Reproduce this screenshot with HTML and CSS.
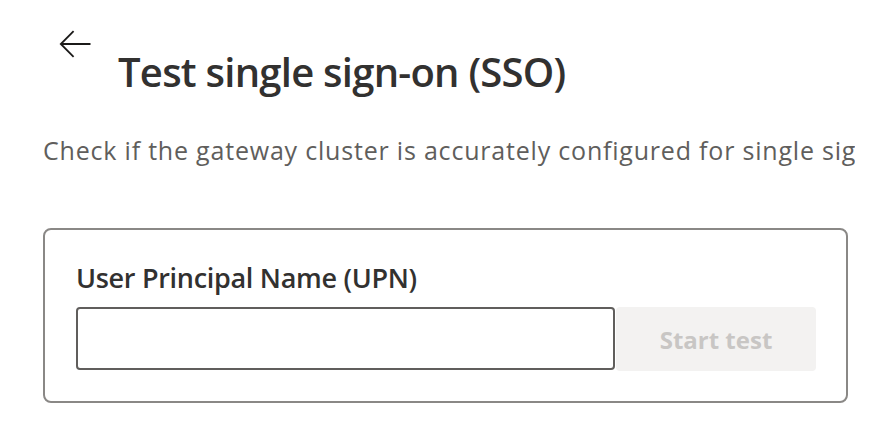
FILE: index.html
```html
<!DOCTYPE html>
<html lang="en">
<head>
<meta charset="utf-8">
<title>Test single sign-on (SSO)</title>
<link rel="stylesheet" href="styles.css">
</head>
<body>
<main class="page">
  <header class="header">
    <button class="back" type="button" aria-label="Back">
      <svg width="32" height="28" viewBox="0 0 32 28" aria-hidden="true">
        <path d="M31.5 14H1.8M14.6 1.2L1.8 14l12.8 12.8" fill="none" stroke="#1b1a19" stroke-width="1.8" stroke-linecap="butt" stroke-linejoin="miter"/>
      </svg>
    </button>
    <h1 class="title">Test single sign-on (SSO)</h1>
  </header>
  <p class="desc">Check if the gateway cluster is accurately configured for single sign-on by entering a user principal name.</p>
  <section class="card">
    <label class="label" for="upn">User Principal Name (UPN)</label>
    <div class="row">
      <input class="input" id="upn" type="text">
      <button class="start" type="button" disabled>Start test</button>
    </div>
  </section>
</main>
</body>
</html>
```

FILE: styles.css
```css
html, body {
  margin: 0;
  padding: 0;
  background: #ffffff;
}

body {
  font-family: "Open Sans", "Noto Sans", sans-serif;
  color: #323130;
}

.page {
  width: 812px;
  padding: 30px 0 0 43px;
  overflow: hidden;
}

.header {
  display: flex;
  align-items: flex-start;
}

.back {
  display: block;
  margin: 0 0 0 16px;
  padding: 0;
  border: 0;
  background: none;
  width: 32px;
  height: 28px;
  cursor: pointer;
}

.back svg {
  display: block;
}

.title {
  margin: 16px 0 0 27px;
  font-size: 40px;
  line-height: 52px;
  font-weight: 600;
  color: #323130;
  letter-spacing: -0.75px;
}

.desc {
  margin: 36px 0 0 0;
  font-size: 25px;
  line-height: 32px;
  color: #605e5c;
  white-space: nowrap;
  letter-spacing: 0.8px;
}

.card {
  box-sizing: border-box;
  width: 805px;
  margin-top: 62px;
  border: 2px solid #8a8886;
  border-radius: 8px;
  padding: 30px 30px 30px 31px;
}

.label {
  display: block;
  font-size: 27px;
  line-height: 36px;
  font-weight: 600;
  color: #323130;
  letter-spacing: -0.3px;
}

.row {
  display: flex;
  margin-top: 11px;
}

.input {
  box-sizing: border-box;
  flex: 1;
  height: 63px;
  margin: 0;
  border: 2px solid #605e5c;
  border-radius: 4px;
  background: #fff;
  font: inherit;
}

.start {
  box-sizing: border-box;
  width: 200px;
  height: 64px;
  margin: 0 0 0 1px;
  border: 0;
  border-radius: 4px;
  background: #f3f2f1;
  color: #c8c6c4;
  font-family: inherit;
  font-size: 24px;
  font-weight: 700;
}
```
